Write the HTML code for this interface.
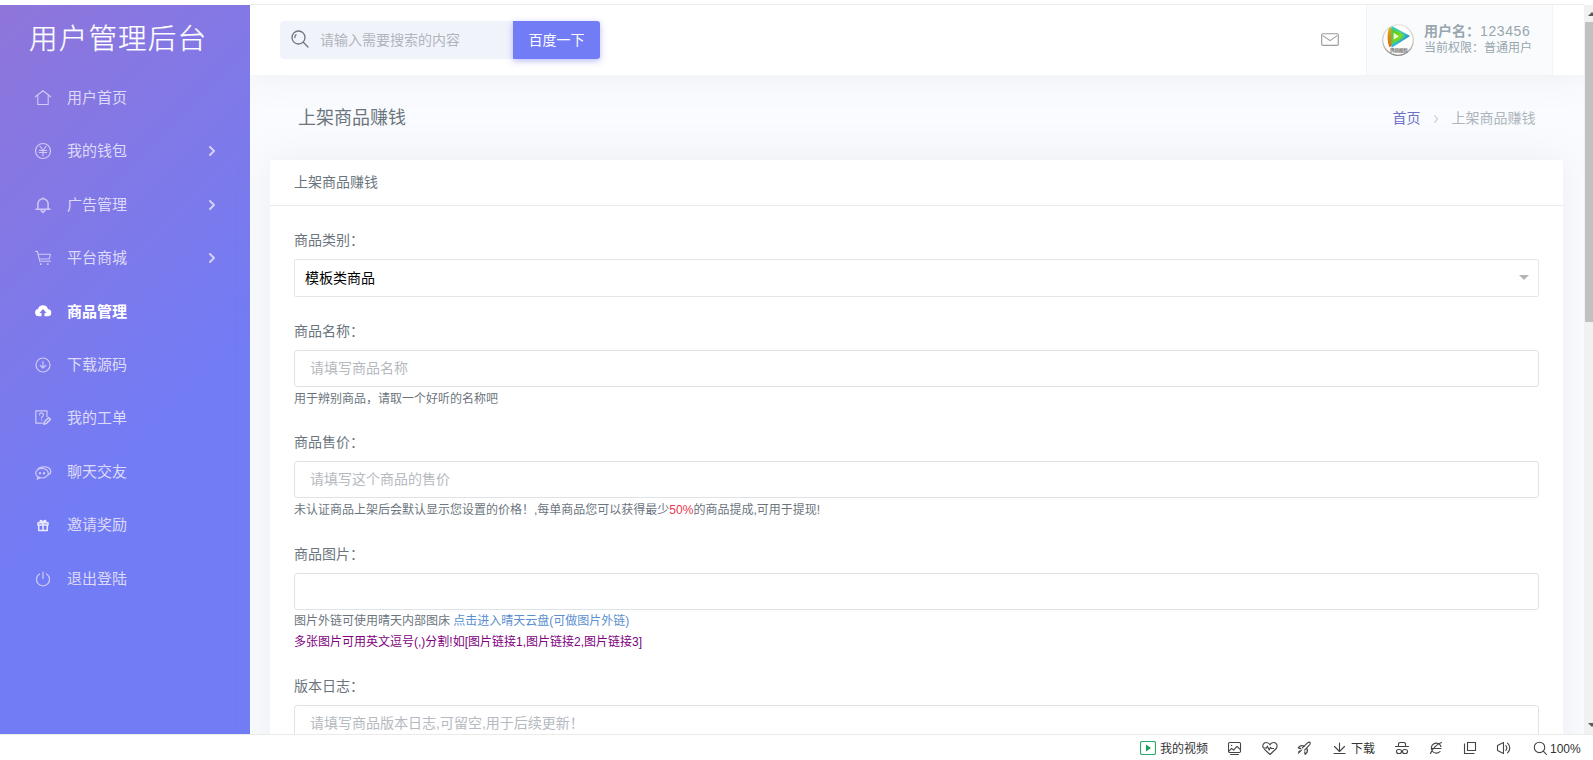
<!DOCTYPE html>
<html lang="zh-CN">
<head>
<meta charset="utf-8">
<title>上架商品赚钱</title>
<style>
*{box-sizing:border-box;margin:0;padding:0}
html,body{width:1593px;height:760px;overflow:hidden;background:#fff}
body{font-family:"Liberation Sans","Noto Sans CJK SC",sans-serif;font-size:14px;color:#6c757d;position:relative}
#topline{position:absolute;left:250px;top:4px;width:1334px;height:1px;background:#ececec}
#page{position:absolute;left:0;top:5px;width:1584px;height:729px;background:#fafbfe;overflow:hidden}
/* sidebar */
#side{position:absolute;left:0;top:0;width:250px;height:729px;background:linear-gradient(135deg,#8f75da 0,#727cf5 60%)}
#logo{-webkit-text-stroke:.250px #fff;position:absolute;left:29px;top:12.700px;font-size:28.600px;letter-spacing:1.100px;font-weight:300;color:#fff;line-height:42px;white-space:nowrap}
.nav{position:absolute;left:0;width:250px;height:24px;line-height:24px;color:#dddaf8;font-size:15px;white-space:nowrap}
.nav .t{position:absolute;left:67px;top:0}
.nav svg{position:absolute;left:34px;top:3px;width:18px;height:18px;fill:none;stroke:#cfc9f6;stroke-width:1.2;stroke-linecap:round;stroke-linejoin:round}
.nav .ar{position:absolute;left:206px;top:6.300px;width:12px;height:12px;stroke-width:2;stroke:#d5d0f8}
.nav.act{color:#fff;font-weight:700}
.nav.act svg{stroke:none;fill:#fff}
/* header */
#head{position:absolute;left:250px;top:0;width:1334px;height:70px;background:#fff;box-shadow:0 0 35px 0 rgba(154,161,171,.15)}
#search{position:absolute;left:30px;top:16px;width:233px;height:38px;background:#f1f3fa;border-radius:4px 0 0 4px;color:#b0b5bd;font-size:14px;line-height:38px}
#search span{position:absolute;left:40px;top:0;white-space:nowrap}
#search svg{position:absolute;left:10px;top:8px;width:20px;height:20px;fill:none;stroke:#6c757d;stroke-width:1.3;stroke-linecap:round}
#sbtn{position:absolute;left:263px;top:16px;width:87px;height:38px;background:#727cf5;color:#fff;font-size:14px;line-height:38px;text-align:center;border-radius:0 3px 3px 0;box-shadow:0 2px 6px 0 rgba(114,124,245,.5)}
#mail{position:absolute;left:1071px;top:28px;width:18px;height:13px;fill:none;stroke:#9c9c9c;stroke-width:1.15;stroke-linejoin:round}
#user{position:absolute;left:1116px;top:0;width:187px;height:70px;background:#fafbfd;border-left:1px solid #f1f3fa;border-right:1px solid #f1f3fa}
#avatar{position:absolute;left:15px;top:19px;width:32px;height:32px}
#uname{position:absolute;left:57px;top:18px;font-size:14px;line-height:17px;color:#98a6ad;white-space:nowrap}
#uname b{font-weight:700}#uname span{letter-spacing:.600px}
#urole{position:absolute;left:57px;top:35.3px;font-size:12px;line-height:16px;color:#98a6ad;white-space:nowrap}
/* content */
#ptitle{position:absolute;left:298px;top:99px;font-size:18px;line-height:28px;color:#6c757d;white-space:nowrap}
#crumb{position:absolute;right:48.500px;top:103px;font-size:14px;line-height:21px;white-space:nowrap;color:#adb5bd}
#crumb a{color:#6c72c5;text-decoration:none}
#crumb svg{width:6px;height:10px;margin:0 13px 0 12px;fill:none;stroke:#ced4da;stroke-width:1.4;vertical-align:-1px}
#card{position:absolute;left:270px;top:155px;width:1293px;height:600px;background:#fff;box-shadow:0 0 35px 0 rgba(154,161,171,.15)}
#chead{position:absolute;left:0;top:0;width:1293px;height:46px;border-bottom:1px solid #e7ebf0;font-size:14px;line-height:21px;padding:12px 0 0 24px;color:#6c757d}
.lb{position:absolute;left:24px;font-size:14px;line-height:20px;color:#6c757d;white-space:nowrap}
.in{position:absolute;left:24px;width:1245px;height:37px;border:1px solid #e0e3e6;border-radius:3px;background:#fff;font-size:14px;line-height:35px;padding-left:15px;color:#b5bac0;white-space:nowrap}
.in.sel{color:#000;padding-left:10px;font-size:14px;height:38px;line-height:36px;border-color:#e6e6e6;border-radius:2px}
.in.sel:after{content:"";position:absolute;right:9.500px;top:15px;border:5.500px solid transparent;border-top:5.500px solid #b4b4b4;border-bottom:0}
.hp{position:absolute;left:24px;font-size:12px;line-height:18px;color:#6c757d;white-space:nowrap}
.hp .r{color:#e8384f}
.hp a{color:#5b8fd0;text-decoration:none}
.hp.p{color:#800080}
/* scrollbar */
#sb{position:absolute;left:1584px;top:5px;width:9px;height:729px;background:#f1f1f1;overflow:hidden}
#sb .th{position:absolute;left:1px;top:17px;width:8px;height:300px;background:#c1c1c1}
#sb .up{position:absolute;left:4px;top:7px;border:4.500px solid transparent;border-bottom:4px solid #5a5a5a;border-top:0;width:0;height:0}
#sb .dn{position:absolute;left:4px;top:718px;border:4.500px solid transparent;border-top:4px solid #5a5a5a;border-bottom:0;width:0;height:0}
/* bottom bar */
#bot{position:absolute;left:0;top:734px;width:1593px;height:26px;background:#fff;border-top:1px solid #eaeaea;font-size:12px;color:#333}
#bot span{position:absolute;top:7px;line-height:14px;white-space:nowrap}
#bot svg{position:absolute;top:6px;width:14px;height:14px;fill:none;stroke:#444;stroke-width:1.1;stroke-linecap:round;stroke-linejoin:round}
</style>
</head>
<body>
<div id="topline"></div>
<div id="page">
  <div id="head">
    <div id="search">
      <svg viewBox="0 0 20 20"><circle cx="8.5" cy="8.5" r="6.5"/><path d="M13.3 13.3L18 18"/><path d="M4.8 8.5a3.7 3.7 0 0 1 1.2-2.7"/></svg>
      <span>请输入需要搜索的内容</span>
    </div>
    <div id="sbtn">百度一下</div>
    <svg id="mail" viewBox="0 0 18 13"><rect x="0.7" y="0.7" width="16.6" height="11.600" rx="1.3"/><path d="M1.800 2.600L9 7.600l7.200-5"/></svg>
    <div id="user">
      <svg id="avatar" viewBox="0 0 32 32">
        <defs>
          <linearGradient id="gb" x1="0" y1="0" x2="0" y2="1"><stop offset="0" stop-color="#e9e4dc"/><stop offset=".55" stop-color="#cfccc6"/><stop offset="1" stop-color="#8d8d8d"/></linearGradient>
          <linearGradient id="go" x1="0" y1="0" x2="0" y2="1"><stop offset="0" stop-color="#e9b215"/><stop offset=".5" stop-color="#de860b"/><stop offset="1" stop-color="#e06a10"/></linearGradient>
          <linearGradient id="gc" x1="0" y1="0" x2="1" y2="1"><stop offset="0" stop-color="#35cfe0"/><stop offset=".45" stop-color="#25c3ec"/><stop offset="1" stop-color="#0a55b8"/></linearGradient>
          <linearGradient id="gg" x1="0" y1="0" x2="1" y2=".4"><stop offset="0" stop-color="#4fbf1c"/><stop offset=".6" stop-color="#86dd08"/><stop offset="1" stop-color="#35c9a8"/></linearGradient>
          <clipPath id="cc"><circle cx="16" cy="16" r="15"/></clipPath>
          <filter id="bl" x="-10%" y="-10%" width="120%" height="120%"><feGaussianBlur stdDeviation=".5"/></filter><filter id="bl2" x="-20%" y="-20%" width="140%" height="140%"><feGaussianBlur stdDeviation="1"/></filter>
        </defs>
        <circle cx="16" cy="16" r="15.300" fill="#fefefd" stroke="url(#gb)" stroke-width="1.300"/>
        <g clip-path="url(#cc)">
          <path d="M7.200 3C5 9.500 5 17 7.400 23.300L10.500 21.500V4z" fill="url(#go)" filter="url(#bl)"/>
          <path d="M9.300 1.800L28 12 9.600 23.800z" fill="url(#gc)" filter="url(#bl)"/>
          <path d="M9.800 4.300L25 11.800 9.800 20.500z" fill="url(#gg)" filter="url(#bl2)"/>
          <path d="M11.600 8.800L16.800 12.200 11.600 15.800z" fill="#eef9dc" filter="url(#bl)"/>
        </g>
        <path d="M9 24.500h15.500l-2.500 4.300h-10z" fill="#9a9a9a" opacity=".5"/>
        <text x="16.800" y="28.300" font-size="4.400" text-anchor="middle" fill="#555" style="font-family:'Liberation Sans','Noto Sans CJK SC',sans-serif">腾讯视频</text>
      </svg>
      <div id="uname"><b>用户名：</b><span>123456</span></div>
      <div id="urole">当前权限：普通用户</div>
    </div>
  </div>
  <div id="side">
    <div id="logo">用户管理后台</div>
    <div class="nav" style="top:81px"><svg viewBox="0 0 18 18" style="stroke-width:1.100"><path d="M1.300 7.800L9 1.700l7.700 6.100M3.800 6.500v9h10.400v-9"/></svg><span class="t">用户首页</span></div>
    <div class="nav" style="top:134px"><svg viewBox="0 0 18 18"><circle cx="9" cy="9" r="7.500"/><path d="M6 4.300L9 8.500l3-4.200M9 8.500v5.200M5.300 8.500h7.400M5.300 10.500h7.400" style="stroke-width:1.100"/></svg><span class="t">我的钱包</span><svg class="ar" viewBox="0 0 12 12"><path d="M4 2l4 4-4 4"/></svg></div>
    <div class="nav" style="top:188px"><svg viewBox="0 0 18 18" style="stroke-width:1.500"><path d="M3.900 13.300V7.800a5.100 5.100 0 0 1 10.200 0v5.500M2 13.300h14M7.200 14.600l1.800 1.800 1.800-1.800M9 2.600V1.900"/></svg><span class="t">广告管理</span><svg class="ar" viewBox="0 0 12 12"><path d="M4 2l4 4-4 4"/></svg></div>
    <div class="nav" style="top:241px"><svg viewBox="0 0 18 18" style="stroke-width:1.100"><path d="M1.700 2.400h1.700l2.400 9.900h10.700M4 5.300h12.300l-.900 4.700H5.300"/><path d="M6 14.300h1.600v1.600H6zM13 14.300h1.600v1.600H13z" style="fill:#cfc9f6;stroke:none"/></svg><span class="t">平台商城</span><svg class="ar" viewBox="0 0 12 12"><path d="M4 2l4 4-4 4"/></svg></div>
    <div class="nav act" style="top:295px"><svg viewBox="0 0 18 18"><path transform="translate(0,-1.300)" d="M4.500 14.500a3.600 3.600 0 0 1-.600-7.100 5.200 5.200 0 0 1 10.100.100 3.500 3.500 0 0 1-.500 7h-3v-3.200h2L9 7.300 5.500 11.300h2v3.200z"/></svg><span class="t">商品管理</span></div>
    <div class="nav" style="top:348px"><svg viewBox="0 0 18 18"><circle cx="9" cy="9" r="7"/><path d="M9 5.5v6.500M6.300 9.500L9 12.200l2.700-2.700"/></svg><span class="t">下载源码</span></div>
    <div class="nav" style="top:401px"><svg viewBox="0 0 18 18"><path d="M13 7.500V1.800H1.800v12.400h6.500"/><path d="M5.500 5.800a2 2 0 1 1 2.900 1.800c-.500.300-.800.700-.800 1.300M7.600 10.800v.400"/><path d="M9.800 15.200l.600-2.400 4.200-4.200 1.800 1.800-4.200 4.200z" style="stroke-width:1.500"/></svg><span class="t">我的工单</span></div>
    <div class="nav" style="top:455px"><svg viewBox="0 0 18 18"><ellipse cx="8" cy="10.200" rx="6.300" ry="4.800"/><path d="M4 14l-.800 2.200 2.800-1.400"/><path d="M3.800 6.300C6 2.800 15.800 2.600 16.800 8c.200 1.800-.800 3-2.400 3.800"/><circle cx="6" cy="10.200" r=".600" fill="#cfc9f6"/><circle cx="10" cy="10.200" r=".600" fill="#cfc9f6"/></svg><span class="t">聊天交友</span></div>
    <div class="nav" style="top:508px"><svg viewBox="0 0 18 18" style="stroke:#ece9fc;stroke-width:1.500"><path d="M4.700 9h8.600v5.500H4.700zM4 6.800h10V9H4zM9 6.800v7.700M9 6.500C7.800 4 5.800 4.200 6.200 5.500S9 6.500 9 6.500zM9 6.500c1.200-2.500 3.200-2.300 2.800-1S9 6.500 9 6.500z"/></svg><span class="t">邀请奖励</span></div>
    <div class="nav" style="top:562px"><svg viewBox="0 0 18 18"><path d="M5.500 4A6.500 6.500 0 1 0 12.500 4M9 2v6.500"/></svg><span class="t">退出登陆</span></div>
  </div>
  <div id="ptitle">上架商品赚钱</div>
  <div id="crumb"><a>首页</a><svg viewBox="0 0 6 10"><path d="M1.500 1.500L4.500 5 1.500 8.500"/></svg>上架商品赚钱</div>
  <div id="card">
    <div id="chead">上架商品赚钱</div>
    <div class="lb" style="top:70px">商品类别：</div>
    <div class="in sel" style="top:99px">模板类商品</div>
    <div class="lb" style="top:161px">商品名称：</div>
    <div class="in" style="top:190px">请填写商品名称</div>
    <div class="hp" style="top:230px">用于辨别商品，请取一个好听的名称吧</div>
    <div class="lb" style="top:272px">商品售价：</div>
    <div class="in" style="top:301px">请填写这个商品的售价</div>
    <div class="hp" style="top:341px">未认证商品上架后会默认显示您设置的价格！,每单商品您可以获得最少<span class="r">50%</span>的商品提成,可用于提现!</div>
    <div class="lb" style="top:384px">商品图片：</div>
    <div class="in" style="top:413px"></div>
    <div class="hp" style="top:452.3px">图片外链可使用晴天内部图床 <a>点击进入晴天云盘(可做图片外链)</a></div>
    <div class="hp p" style="top:473px">多张图片可用英文逗号(,)分割!如[图片链接1,图片链接2,图片链接3]</div>
    <div class="lb" style="top:516px">版本日志：</div>
    <div class="in" style="top:545px">请填写商品版本日志,可留空,用于后续更新！</div>
  </div>
</div>
<div id="sb"><div class="up"></div><div class="th"></div><div class="dn"></div></div>
<div id="bot">
  <svg style="left:1140px;width:16px" viewBox="0 0 16 14"><rect x=".500" y=".500" width="15" height="13" rx="1.500" stroke="#2aa76a"/><path d="M6 3.600v6.800L11 7z" fill="#1a9e5c" stroke="none"/></svg>
  <span style="left:1160px">我的视频</span>
  <svg style="left:1228px" viewBox="0 0 14 14"><rect x=".5" y="1.500" width="12" height="10" rx="1.200"/><path d="M1.400 9.700l2.200-2.300 2 1.800L9 5.300l3.400 3.300M2.500 13.500h8"/><circle cx="3.600" cy="4.400" r=".700" fill="#444" stroke="none"/></svg>
  <svg style="left:1261.500px;width:16px" viewBox="0 0 16 14"><path d="M4.400 7H1.400C0 4.500 1.400 1.500 4.300 1.500 6 1.500 7.300 2.500 8 3.800 8.700 2.500 10 1.500 11.700 1.500c3 0 4.300 3.200 2.600 6L8 13.500 2.400 8.400"/><path d="M4.400 7l1-1.800 1.800 3.800 1.300-2.800.800 1.300h2.200"/></svg>
  <svg style="left:1297px" viewBox="0 0 14 14"><path d="M5.400 6.900L10.500 1.800c.800-.700 1.800-.800 2.500-.500.300.700.200 1.700-.500 2.500L7.600 9.100"/><path d="M1.300 6.900C2.500 4.800 5 4.200 7 5.200M1.300 6.900l2.400.800" style="stroke-width:1.300"/><path d="M9.900 7.600c.800 2 .200 4.400-1.700 5.700l-.400-2.300" style="stroke-width:1.300"/><path d="M4.900 9.200L1.300 12.700l.500-2.400z" fill="#444" stroke-width=".600"/></svg>
  <svg style="left:1332px" viewBox="0 0 14 14"><path d="M7.500 2v8.300M2.500 5.500l5 5 5-5M2 12.500h11"/></svg>
  <span style="left:1351px">下载</span>
  <svg style="left:1395px" viewBox="0 0 14 14"><path d="M3.500 5.500V3.200A1.700 1.700 0 0 1 5.200 1.500h3.600A1.700 1.700 0 0 1 10.500 3.200v2.300M.500 5.500h13"/><rect x="1.500" y="8.500" width="5" height="4" rx="2"/><rect x="7.500" y="8.500" width="5" height="4" rx="2"/></svg>
  <svg style="left:1429px" viewBox="0 0 14 14"><path d="M12 5.500A5 5 0 1 0 11 10.500M3 7.500h9M1.500 12.500C3 8 8 3 12.500 1.500"/></svg>
  <svg style="left:1463px" viewBox="0 0 14 14"><path d="M4.500 1.500h8v8h-8zM1.500 2.500v10h10" stroke-linejoin="miter" stroke-linecap="butt"/></svg>
  <svg style="left:1496px;width:16px" viewBox="0 0 16 14"><path d="M1.500 4.500L7.500 1.500v11L1.500 9.500zM9.800 4.600q2 2.400 0 4.800M11.600 2.200q4.400 4.800 0 9.600"/></svg>
  <svg style="left:1533px" viewBox="0 0 14 14"><circle cx="6.500" cy="6.400" r="5.200"/><path d="M10.300 10.200L13.400 13.300"/></svg>
  <span style="left:1550px">100%</span>
</div>
</body>
</html>
